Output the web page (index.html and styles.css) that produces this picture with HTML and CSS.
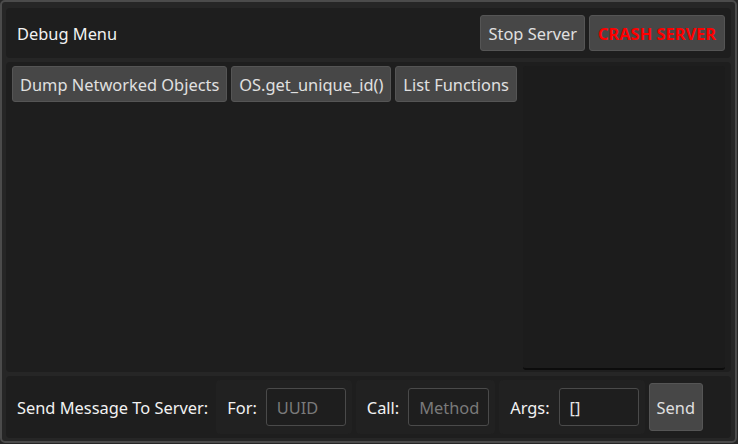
FILE: index.html
```html
<!DOCTYPE html>
<html>
<head>
<meta charset="utf-8">
<link rel="stylesheet" href="styles.css">
</head>
<body>
<div class="window">
  <div class="header">
    <div class="title">Debug Menu</div>
    <div class="header-actions">
      <button class="btn">Stop Server</button>
      <button class="btn crash">CRASH SERVER</button>
    </div>
  </div>
  <div class="content">
    <div class="left">
      <div class="toolbar">
        <button class="btn">Dump Networked Objects</button>
        <button class="btn">OS.get_unique_id()</button>
        <button class="btn">List Functions</button>
      </div>
    </div>
    <div class="output"></div>
  </div>
  <div class="footer">
    <div class="footer-label">Send Message To Server:</div>
    <div class="group"><span class="lbl">For:</span><div class="input placeholder">UUID</div></div>
    <div class="group"><span class="lbl">Call:</span><div class="input wide placeholder">Method</div></div>
    <div class="group"><span class="lbl">Args:</span><div class="input">[]</div></div>
    <button class="btn send">Send</button>
  </div>
</div>
</body>
</html>
```
FILE: styles.css
```css
html, body {
  margin: 0;
  padding: 0;
  background: #262626;
}
body {
  width: 738px;
  height: 444px;
  overflow: hidden;
  font-family: "Noto Sans", "Open Sans", sans-serif;
  font-size: 16.4px;
  color: #e6e6e6;
}
.window {
  box-sizing: border-box;
  width: 737px;
  height: 443px;
  border: 2px solid #4b4b4b;
  border-radius: 5px;
  background: #262626;
  padding: 6px 4px 3px 4px;
  display: flex;
  flex-direction: column;
  gap: 4px;
}
.header {
  height: 50px;
  box-sizing: border-box;
  background: #1e1e1e;
  border-radius: 4px;
  display: flex;
  align-items: center;
  justify-content: space-between;
  padding: 0 6px 0 11px;
}
.title {
  color: #f2f2f2;
}
.header-actions {
  display: flex;
  gap: 4px;
}
.btn {
  font: inherit;
  color: #e0e0e0;
  background: #474747;
  border: 1px solid #555555;
  border-radius: 3px;
  height: 36px;
  padding: 0 7px;
  margin: 0;
  box-sizing: border-box;
  white-space: nowrap;
}
.crash {
  color: #ff0000;
  font-weight: 700;
  padding: 0 8px;
}
.content {
  flex: 1;
  display: flex;
  background: #1e1e1e;
  border-radius: 4px;
  padding: 4px 6px 2px 6px;
  gap: 4px;
  min-height: 0;
}
.left {
  flex: 1;
}
.toolbar {
  display: flex;
  gap: 4px;
}
.output {
  width: 202px;
  background: #1c1c1c;
  border-radius: 3px;
  border-bottom: 2px solid #0c0c0c;
}
.footer {
  height: 62px;
  box-sizing: border-box;
  background: #1e1e1e;
  border-radius: 4px;
  display: flex;
  align-items: center;
  padding: 0 6px 0 11px;
  gap: 4px;
}
.footer-label {
  margin-right: 4px;
  color: #f2f2f2;
}
.group {
  background: #212121;
  border-radius: 4px;
  height: 54px;
  box-sizing: border-box;
  display: flex;
  align-items: center;
  padding: 0 6px 0 11px;
  gap: 9px;
}
.lbl {
  color: #f2f2f2;
}
.input {
  box-sizing: border-box;
  width: 80px;
  height: 38px;
  border: 1px solid #4a4a4a;
  border-radius: 3px;
  background: #1e1e1e;
  display: flex;
  align-items: center;
  padding: 0 10px;
  color: #e6e6e6;
}
.input.wide {
  width: 81px;
}
.placeholder {
  color: #7a7a7a;
}
.send {
  height: 48px;
  margin-left: 0;
  padding: 0 7px;
}
```
